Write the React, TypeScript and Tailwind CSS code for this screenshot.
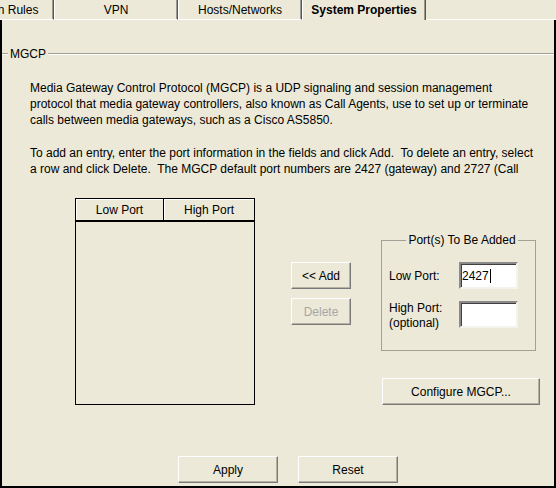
import React from "react";

type TabProps = {
  label: string;
  selected?: boolean;
  className?: string;
};

// notebook tab, a raised edge on the left and a dark edge on the right
const Tab = ({ label, selected, className = "" }: TabProps) => {
  return (
    <div
      className={`flex h-[20px] w-[124px] shrink-0 items-center justify-center whitespace-nowrap border-l border-r border-l-white border-r-[#555555] shadow-[inset_-1px_0_0_#9a9888] ${
        selected ? "font-bold" : "border-b border-b-white"
      } ${className}`}
    >
      {label}
    </div>
  );
};

type ButtonProps = {
  label: string;
  className?: string;
  disabled?: boolean;
};

const RaisedButton = ({ label, className = "", disabled }: ButtonProps) => {
  return (
    <button
      type="button"
      className={`flex h-[27px] shrink-0 items-center justify-center border border-t-white border-l-white border-r-[#7a7a7a] border-b-[#7a7a7a] shadow-[inset_-1px_-1px_0_#b4b2a4] ${
        disabled ? "text-[#a6a6a6]" : "text-black"
      } ${className}`}
    >
      {label}
    </button>
  );
};

const PortField = ({ value, caret }: { value?: string; caret?: boolean }) => {
  return (
    <div className="flex h-[27px] w-[59px] items-center border-2 border-t-[#8a8a8a] border-l-[#8a8a8a] border-r-[#f4f3ee] border-b-[#f4f3ee] bg-white pl-[1px] shadow-[inset_1px_1px_0_#404040] leading-[14px] self-center">
      {value}
      {caret && <span className="ml-[1px] inline-block h-[14px] w-[1px] bg-black" />}
    </div>
  );
};

export default function App() {
  return (
    <div className="flex h-[488px] w-[556px] flex-col overflow-hidden bg-[#ece9d8] font-['Liberation_Sans',Arial,sans-serif] text-[12px] text-black">
      {/* tab strip, the first tab runs off the left edge */}
      <div className="flex h-[20px] shrink-0">
        <Tab label="Translation Rules" className="-ml-[70px]" />
        <Tab label="VPN" />
        <Tab label="Hosts/Networks" />
        <Tab label="System Properties" selected />
        <div className="h-[20px] flex-1 border-b border-b-white" />
      </div>

      <div className="flex h-[468px] flex-col border-x-2 border-b-2 border-black">
        {/* MGCP group heading */}
        <div className="mt-[27px] flex h-[14px] items-center">
          <div className="h-[2px] w-[6px] border-t border-t-[#a3a196] border-b border-b-white" />
          <span className="px-[2px] leading-[14px]">MGCP</span>
          <div className="h-[2px] flex-1 border-t border-t-[#a3a196] border-b border-b-white" />
        </div>

        <div className="mt-[19px] pl-[28px] leading-[16px] whitespace-nowrap">
          <p>Media Gateway Control Protocol (MGCP) is a UDP signaling and session management</p>
          <p>protocol that media gateway controllers, also known as Call Agents, use to set up or terminate</p>
          <p>calls between media gateways, such as a Cisco AS5850.</p>
          <p className="mt-[17px]">
            To add an entry, enter the port information in the fields and click Add.&nbsp; To delete an entry, select
          </p>
          <p>a row and click Delete.&nbsp; The MGCP default port numbers are 2427 (gateway) and 2727 (Call</p>
        </div>

        <div className="mt-[21px] flex items-start">
          {/* port table */}
          <div className="ml-[73px] flex h-[207px] w-[180px] flex-col border border-black">
            <div className="flex h-[23px] border-b-2 border-black">
              <div className="flex w-[88px] items-center justify-center border-r border-black shadow-[inset_1px_1px_0_#ffffff]">
                Low Port
              </div>
              <div className="flex flex-1 items-center justify-center shadow-[inset_1px_1px_0_#ffffff]">
                High Port
              </div>
            </div>
            <div className="flex-1" />
          </div>

          <div className="ml-[36px] mt-[64px] flex flex-col gap-[9px]">
            <RaisedButton label="<< Add" className="w-[60px]" />
            <RaisedButton label="Delete" className="w-[60px]" disabled />
          </div>

          <div className="ml-[30px] mt-[35px] flex flex-col">
            <fieldset className="h-[118px] w-[155px] border border-[#a3a196] pl-[7px] pt-[15px]">
              <legend className="mx-auto px-[2px] leading-[14px]">Port(s) To Be Added</legend>
              <div className="grid grid-cols-[70px_59px] gap-y-[9px]">
                <span className="self-center leading-[14px]">Low Port:</span>
                <PortField value="2427" caret />
                <span className="mt-[3px] self-center leading-[15px]">
                  High Port:
                  <br />
                  (optional)
                </span>
                <PortField />
              </div>
            </fieldset>
            <RaisedButton label="Configure MGCP..." className="ml-[1px] mt-[27px] w-[158px]" />
          </div>
        </div>

        <div className="mt-[51px] flex gap-[20px] pl-[176px]">
          <RaisedButton label="Apply" className="w-[100px]" />
          <RaisedButton label="Reset" className="w-[100px]" />
        </div>
      </div>
    </div>
  );
}
